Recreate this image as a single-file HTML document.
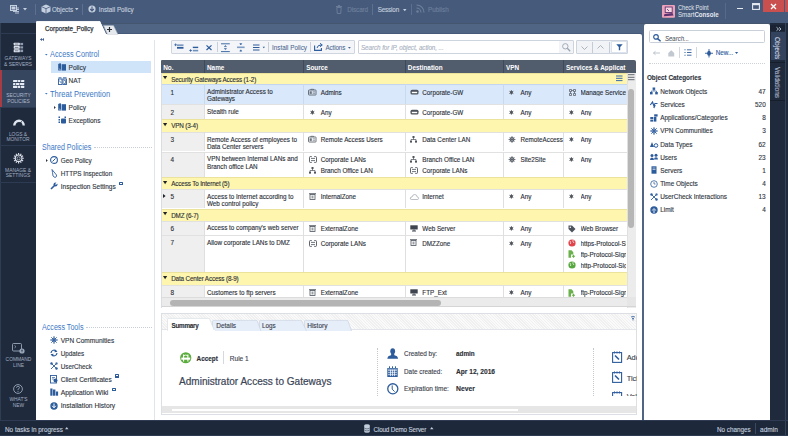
<!DOCTYPE html>
<html><head><meta charset="utf-8">
<style>
*{margin:0;padding:0;box-sizing:border-box}
html,body{width:788px;height:436px;overflow:hidden;background:#506483;font-family:"Liberation Sans",sans-serif;position:relative}
.a{position:absolute}
.t{position:absolute;white-space:nowrap;line-height:1;-webkit-text-stroke:0.12px}
svg{overflow:visible}
</style></head><body>

<div class="a" style="left:0px;top:0px;width:788px;height:23px;background:#465a7b;"></div>
<div class="a" style="left:36px;top:23px;width:752px;height:1px;background:#43556f;"></div>
<div class="a" style="left:36px;top:33px;width:606px;height:1px;background:#46597a;"></div>
<div class="a" style="left:0px;top:23px;width:36px;height:397px;background:#1f2a3d;"></div>
<div class="a" style="left:769.5px;top:23px;width:18.5px;height:397px;background:#1f2a3d;"></div>
<div class="a" style="left:0px;top:420px;width:788px;height:16px;background:#1d283a;"></div>
<div class="a" style="left:0px;top:420px;width:788px;height:1px;background:#2e3b52;"></div>
<div class="a" style="left:0px;top:23px;width:0.8px;height:397px;background:#2f3c53;"></div>
<div class="a" style="left:36px;top:34px;width:606px;height:386px;background:#ffffff;border-top-right-radius:2px"></div>
<div class="a" style="left:154px;top:40px;width:1px;height:380px;background:#e1e4e8;"></div>
<div class="a" style="left:644px;top:23.8px;width:125.6px;height:396.5px;background:#ffffff;border-top-left-radius:2px;border-top-right-radius:2px"></div>
<svg class="a" style="left:10px;top:5px;" width="10" height="9" viewBox="0 0 10 9"><rect x="0.5" y="0.5" width="6" height="5" fill="none" stroke="#c4cfdf" stroke-width="1"/><rect x="1.5" y="1.5" width="4" height="3" fill="#c4cfdf"/><path d="M3 6.5 h6 M5 8 h4 M7 3 h2 M7 4.5 h2" stroke="#c4cfdf" stroke-width="0.9"/></svg>
<svg class="a" style="left:23px;top:8px;" width="4" height="3" viewBox="0 0 4 3"><path d="M0 0 h4 l-2 2.5z" fill="#c4cfdf"/></svg>
<div class="a" style="left:35px;top:4px;width:1px;height:11px;background:#5d7090;"></div>
<svg class="a" style="left:41px;top:4px;" width="10" height="10" viewBox="0 0 10 10"><path d="M5 0.5 L9.5 2.6 V7.4 L5 9.5 L0.5 7.4 V2.6 Z" fill="#c4cfdf"/><path d="M0.5 2.6 L5 4.7 L9.5 2.6 M5 4.7 V9.5" stroke="#465a7c" stroke-width="0.8" fill="none"/></svg>
<div class="t" style="left:52.00px;top:7.07px;font-size:6.3px;color:#c4cfdf;letter-spacing:-0.048px;">Objects</div>
<svg class="a" style="left:75px;top:8.3px;" width="3.5" height="2.5" viewBox="0 0 3.5 2.5"><path d="M0 0 h3.5 l-1.75 2.2z" fill="#c4cfdf"/></svg>
<div class="a" style="left:82px;top:4px;width:1px;height:11px;background:#5d7090;"></div>
<svg class="a" style="left:88px;top:5px;" width="8" height="8" viewBox="0 0 8 8"><circle cx="4" cy="4" r="3.6" fill="#c4cfdf"/><path d="M4 1.6 V5.6 M2.2 4 L4 5.9 L5.8 4" stroke="#465a7c" stroke-width="1.1" fill="none"/></svg>
<div class="t" style="left:98.70px;top:7.03px;font-size:6.3px;color:#c4cfdf;">Install Policy</div>
<svg class="a" style="left:336px;top:5px;" width="6" height="9" viewBox="0 0 6 9"><path d="M0 1.5 h6 M2 0.5 h2 M0.8 2.5 h4.4 l-0.5 6 h-3.4z" stroke="#6e809c" stroke-width="0.9" fill="none"/></svg>
<div class="t" style="left:347.30px;top:7.20px;font-size:6.3px;color:#6e809c;letter-spacing:-0.097px;">Discard</div>
<div class="a" style="left:372px;top:4px;width:1px;height:11px;background:#5d7090;"></div>
<div class="t" style="left:377.70px;top:7.24px;font-size:6.3px;color:#c4cfdf;letter-spacing:-0.152px;">Session</div>
<svg class="a" style="left:403px;top:8.5px;" width="3.5" height="2.5" viewBox="0 0 3.5 2.5"><path d="M0 0 h3.5 l-1.75 2.2z" fill="#c4cfdf"/></svg>
<div class="a" style="left:411px;top:4px;width:1px;height:11px;background:#5d7090;"></div>
<svg class="a" style="left:416px;top:4px;" width="9" height="9" viewBox="0 0 9 9"><circle cx="1.5" cy="7.5" r="1.2" fill="#6e809c"/><path d="M0.5 4 A4.5 4.5 0 0 1 5 8.5 M0.5 1 A7.5 7.5 0 0 1 8 8.5" stroke="#6e809c" stroke-width="1.1" fill="none"/></svg>
<div class="t" style="left:428.00px;top:7.13px;font-size:6.3px;color:#6e809c;">Publish</div>
<svg class="a" style="left:662px;top:4.7px;" width="13" height="13" viewBox="0 0 13 13"><rect x="0" y="0" width="13" height="12.8" rx="1" fill="#eea3bb"/><rect x="3.2" y="2" width="7" height="5.5" fill="#f6d5e0" stroke="#5a3270" stroke-width="0.9"/><path d="M2.5 9 L10.5 8 L11.5 10.5 L1.8 11.2 Z" fill="#5a3270"/><path d="M5 4 l2 2" stroke="#5a3270" stroke-width="0.8"/></svg>
<div class="t" style="left:678.00px;top:5.10px;font-size:6.4px;color:#e3e8f0;transform:scaleX(0.8839);transform-origin:0 0;-webkit-text-stroke:0">Check Point</div>
<div class="t" style="left:678.00px;top:11.26px;font-size:7.6px;color:#e3e8f0;transform:scaleX(0.8100);transform-origin:0 0;-webkit-text-stroke:0">Smart<b>Console</b></div>
<div class="a" style="left:725px;top:3px;width:1px;height:16px;background:#566a8b;"></div>
<div class="a" style="left:737px;top:8px;width:6px;height:1.3px;background:#e6ebf2;"></div>
<svg class="a" style="left:752px;top:3px;" width="8" height="7" viewBox="0 0 8 7"><rect x="0.6" y="0.6" width="6.8" height="5.8" fill="none" stroke="#e6ebf2" stroke-width="1.1"/><rect x="0.6" y="0.6" width="6.8" height="1.6" fill="#e6ebf2"/></svg>
<div class="a" style="left:763px;top:0px;width:21px;height:11.5px;background:#c9504f;"></div>
<svg class="a" style="left:770px;top:2.5px;" width="7" height="7" viewBox="0 0 7 7"><path d="M1 1 L6 6 M6 1 L1 6" stroke="#ffffff" stroke-width="1.3"/></svg>
<div class="a" style="left:785px;top:0px;width:3px;height:11.5px;background:#c9504f;"></div>
<svg class="a" style="left:36px;top:21px;" width="84" height="14" viewBox="0 0 84 14"><path d="M0 14 V1.5 Q0 0.3 1.3 0.3 H64 L70 13 H84 V14 Z" fill="#ffffff"/></svg>
<svg class="a" style="left:100px;top:24.5px;" width="19" height="9.5" viewBox="0 0 19 9.5"><path d="M3.5 0.5 H13.5 L18 9.5 H7.5 Z" fill="#e5e9ee" stroke="#9aa6b6" stroke-width="0.6"/></svg>
<svg class="a" style="left:36px;top:21px;" width="84" height="14" viewBox="0 0 84 14"><path d="M0 14 V1.5 Q0 0.3 1.3 0.3 H64 L70 13.4 H84 V14 Z" fill="#ffffff"/></svg>
<div class="t" style="left:45.00px;top:25.63px;font-size:6.3px;color:#30353d;-webkit-text-stroke:0.25px">Corporate_Policy</div>
<svg class="a" style="left:107.3px;top:27px;" width="5" height="5" viewBox="0 0 5 5"><path d="M2.5 0 V5 M0 2.5 H5" stroke="#2b2f36" stroke-width="1.2"/></svg>
<div class="a" style="left:0px;top:33px;width:36px;height:1px;background:#2c3a52;"></div>
<svg class="a" style="left:13px;top:41.5px;" width="11" height="11" viewBox="0 0 11 11"><rect x="0.7" y="0.7" width="6.1" height="2.7" rx="0.6" fill="#e4e9f1"/><rect x="0.7" y="4.1" width="6.1" height="2.6" rx="0.6" fill="#e4e9f1"/><rect x="0.7" y="7.3" width="6.1" height="3" rx="0.6" fill="#e4e9f1"/><path d="M1.8 2.05 h3.6 M1.8 5.4 h3.6 M1.8 8.8 h3.6" stroke="#4a5568" stroke-width="0.7"/><rect x="7.3" y="0.9" width="2.8" height="2.3" fill="#8f9bb0"/><rect x="7.3" y="4.3" width="2.8" height="2.2" fill="#8f9bb0"/><rect x="7.3" y="7.6" width="2.8" height="2.5" fill="#8f9bb0"/></svg>
<div class="t" style="left:0.00px;top:57.24px;font-size:4.9px;color:#a3afc1;width:36px;text-align:center;-webkit-text-stroke:0">GATEWAYS</div>
<div class="t" style="left:0.00px;top:62.74px;font-size:4.9px;color:#a3afc1;width:36px;text-align:center;-webkit-text-stroke:0">&amp; SERVERS</div>
<div class="a" style="left:0px;top:70px;width:36px;height:1px;background:#2c3a52;"></div>
<div class="a" style="left:0px;top:70px;width:36px;height:37px;background:#37465f;"></div>
<div class="a" style="left:0px;top:70px;width:1.7px;height:37px;background:#a83c45;"></div>
<svg class="a" style="left:12.8px;top:80px;" width="11.5" height="8" viewBox="0 0 11.5 8"><g fill="#e6ecf5"><rect x="0" y="0" width="4.4" height="2" rx="0.4"/><rect x="4.9" y="0" width="2.4" height="2" rx="0.4"/><rect x="8" y="0" width="3.3" height="2" rx="0.4"/><rect x="0" y="3" width="2.3" height="2" rx="0.4"/><rect x="2.9" y="3" width="3.5" height="2" rx="0.4"/><rect x="6.9" y="3" width="4.4" height="2" rx="0.4"/><rect x="0" y="5.7" width="4.4" height="2.2" rx="0.4"/><rect x="4.9" y="5.7" width="2.4" height="2.2" rx="0.4"/><rect x="8" y="5.7" width="3.3" height="2.2" rx="0.4"/></g></svg>
<div class="t" style="left:0.00px;top:94.44px;font-size:4.9px;color:#aebacb;width:37px;text-align:center;-webkit-text-stroke:0">SECURITY</div>
<div class="t" style="left:0.00px;top:99.94px;font-size:4.9px;color:#aebacb;width:37px;text-align:center;-webkit-text-stroke:0">POLICIES</div>
<div class="a" style="left:0px;top:107px;width:36px;height:1px;background:#2c3a52;"></div>
<svg class="a" style="left:12.8px;top:118.5px;" width="12" height="7" viewBox="0 0 12 7"><path d="M1.3 6.5 A4.7 4.7 0 0 1 10.7 6.5" stroke="#dfe5ee" stroke-width="2.4" fill="none"/><path d="M6 6.5 L8.6 2.3" stroke="#1f2a3d" stroke-width="0.9"/></svg>
<div class="t" style="left:0.00px;top:132.64px;font-size:4.9px;color:#a3afc1;width:36px;text-align:center;-webkit-text-stroke:0">LOGS &amp;</div>
<div class="t" style="left:0.00px;top:137.64px;font-size:4.9px;color:#a3afc1;width:36px;text-align:center;-webkit-text-stroke:0">MONITOR</div>
<div class="a" style="left:0px;top:144.5px;width:36px;height:1px;background:#2c3a52;"></div>
<svg class="a" style="left:12.8px;top:153px;" width="11.5" height="11" viewBox="0 0 11.5 11"><circle cx="5.6" cy="5.3" r="3.3" fill="none" stroke="#dfe5ee" stroke-width="1.1"/><circle cx="5.6" cy="5.3" r="1.6" fill="none" stroke="#dfe5ee" stroke-width="0.6"/><path d="M9.20 5.30 L10.80 5.30 M8.72 7.10 L10.10 7.90 M7.40 8.42 L8.20 9.80 M5.60 8.90 L5.60 10.50 M3.80 8.42 L3.00 9.80 M2.48 7.10 L1.10 7.90 M2.00 5.30 L0.40 5.30 M2.48 3.50 L1.10 2.70 M3.80 2.18 L3.00 0.80 M5.60 1.70 L5.60 0.10 M7.40 2.18 L8.20 0.80 M8.72 3.50 L10.10 2.70 " stroke="#dfe5ee" stroke-width="1.1"/></svg>
<div class="t" style="left:0.00px;top:169.24px;font-size:4.9px;color:#a3afc1;width:36px;text-align:center;-webkit-text-stroke:0">MANAGE &amp;</div>
<div class="t" style="left:0.00px;top:174.44px;font-size:4.9px;color:#a3afc1;width:36px;text-align:center;-webkit-text-stroke:0">SETTINGS</div>
<div class="a" style="left:0px;top:181.5px;width:36px;height:1px;background:#2c3a52;"></div>
<svg class="a" style="left:12px;top:343px;" width="13" height="11" viewBox="0 0 13 11"><rect x="0.5" y="0.5" width="9" height="7.5" rx="1" fill="none" stroke="#9aa7bb" stroke-width="0.9"/><path d="M2.5 2.5 l1.5 1.2 l-1.5 1.2" stroke="#9aa7bb" stroke-width="0.7" fill="none"/><circle cx="10" cy="8" r="2.6" fill="#9aa7bb"/><path d="M9 7.2 h2 M10 7.2 v2" stroke="#1f2a3d" stroke-width="0.6"/></svg>
<div class="t" style="left:0.00px;top:358.24px;font-size:4.9px;color:#a3afc1;width:37px;text-align:center;-webkit-text-stroke:0">COMMAND</div>
<div class="t" style="left:0.00px;top:363.64px;font-size:4.9px;color:#a3afc1;width:37px;text-align:center;-webkit-text-stroke:0">LINE</div>
<svg class="a" style="left:13px;top:384px;" width="10" height="10" viewBox="0 0 10 10"><circle cx="5" cy="5" r="4.4" fill="none" stroke="#9aa7bb" stroke-width="0.9"/><path d="M3.5 3.8 Q3.5 2.3 5 2.3 Q6.5 2.3 6.5 3.6 Q6.5 4.6 5 5.2 V6.2" stroke="#9aa7bb" stroke-width="0.8" fill="none"/><circle cx="5" cy="7.6" r="0.5" fill="#9aa7bb"/></svg>
<div class="t" style="left:0.00px;top:398.24px;font-size:4.9px;color:#a3afc1;width:37px;text-align:center;-webkit-text-stroke:0">WHAT&#39;S</div>
<div class="t" style="left:0.00px;top:403.54px;font-size:4.9px;color:#a3afc1;width:37px;text-align:center;-webkit-text-stroke:0">NEW</div>
<div class="t" style="left:5.00px;top:426.71px;font-size:6.36px;color:#c3cedd;">No tasks in progress</div>
<svg class="a" style="left:65px;top:427px;" width="3.5" height="2.5" viewBox="0 0 3.5 2.5"><path d="M0 2.2 h3.5 l-1.75 -2.2z" fill="#c3cedd"/></svg>
<svg class="a" style="left:364px;top:424px;" width="6" height="9" viewBox="0 0 6 9"><ellipse cx="3" cy="1.5" rx="2.8" ry="1.3" fill="#c3cedd"/><path d="M0.2 1.5 V7.5 A2.8 1.3 0 0 0 5.8 7.5 V1.5" fill="#c3cedd"/><path d="M0.2 3.6 A2.8 1.3 0 0 0 5.8 3.6 M0.2 5.6 A2.8 1.3 0 0 0 5.8 5.6" stroke="#1d283a" stroke-width="0.5" fill="none"/></svg>
<div class="t" style="left:373.50px;top:426.84px;font-size:6.3px;color:#c3cedd;letter-spacing:-0.155px;">Cloud Demo Server</div>
<svg class="a" style="left:430px;top:427px;" width="3.5" height="2.5" viewBox="0 0 3.5 2.5"><path d="M0 2.2 h3.5 l-1.75 -2.2z" fill="#c3cedd"/></svg>
<div class="t" style="left:717.00px;top:426.72px;font-size:6.33px;color:#c3cedd;">No changes</div>
<div class="a" style="left:755px;top:423px;width:1px;height:11px;background:#3a4860;"></div>
<div class="t" style="left:760.00px;top:426.65px;font-size:6.54px;color:#c3cedd;">admin</div>
<div class="a" style="left:785px;top:421px;width:1px;height:15px;background:#34425a;"></div>
<div class="a" style="left:0px;top:435px;width:788px;height:1px;background:#2c3a52;"></div>
<div class="a" style="left:770px;top:25.2px;width:16px;height:6.2px;background:#1a2333;"></div>
<svg class="a" style="left:775.5px;top:26.5px;" width="6" height="4" viewBox="0 0 6 4"><path d="M0.5 0.3 L2.5 2 L0.5 3.7 M3 0.3 L5 2 L3 3.7" stroke="#c3cedd" stroke-width="0.9" fill="none"/></svg>
<div class="a" style="left:770.5px;top:32.4px;width:15px;height:28px;background:#34435d;"></div>
<div class="t" style="left:780.2px;top:36.5px;transform-origin:0 0;transform:rotate(90deg);font-size:6.58px;color:#c9d3e2;">Objects</div>
<div class="t" style="left:780.2px;top:66.5px;transform-origin:0 0;transform:rotate(90deg);font-size:6.43px;color:#a9b5c8;">Validations</div>
<div class="a" style="left:770px;top:61.5px;width:16px;height:1px;background:#161e2b;"></div>
<div class="a" style="left:770px;top:100px;width:16px;height:1px;background:#161e2b;"></div>
<div class="a" style="left:785.3px;top:23px;width:0.8px;height:397px;background:#34425a;"></div>
<svg class="a" style="left:40px;top:37.8px;" width="4" height="3" viewBox="0 0 4 3"><path d="M1.9 0 L0 1.5 L1.9 3 Z M3.9 0 L2 1.5 L3.9 3 Z" fill="#2d4f88"/></svg>
<svg class="a" style="left:44.5px;top:53.5px;" width="3" height="2" viewBox="0 0 3 2"><path d="M0 0 h2.6 l-1.3 1.6z" fill="#3b78c6"/></svg>
<div class="t" style="left:49.80px;top:50.24px;font-size:8.5px;color:#3b78c6;transform:scaleX(0.8608);transform-origin:0 0;-webkit-text-stroke:0">Access Control</div>
<div class="a" style="left:51px;top:61px;width:100px;height:12px;background:#cfe3f9;"></div>
<svg class="a" style="left:58px;top:63.2px;" width="8.5" height="8" viewBox="0 0 8.5 8"><path d="M0.2 1 L2 0.2 L3 0.6 V7.6 H0.2 Z" fill="#2d5c9c"/><path d="M1.2 5.5 Q1.6 7 2.6 6.8" stroke="#ffffff" stroke-width="0.5" fill="none"/><rect x="3.6" y="1.2" width="4.4" height="6.4" fill="#2d5c9c"/></svg>
<div class="t" style="left:68.60px;top:65.36px;font-size:6.5px;color:#2f3540;">Policy</div>
<svg class="a" style="left:58px;top:76.5px;" width="9" height="8" viewBox="0 0 9 8"><path d="M0.5 0.8 h3 M5 0.8 h3.5" stroke="#2d5c9c" stroke-width="0.9"/><rect x="0.5" y="2" width="3.5" height="5.5" fill="none" stroke="#2d5c9c" stroke-width="0.9"/><rect x="5" y="2" width="3.5" height="5.5" fill="none" stroke="#2d5c9c" stroke-width="0.9"/><path d="M1.3 3.5 L3.2 6 M6 3.5 h1.5 v3 h-1.5" stroke="#2d5c9c" stroke-width="0.7" fill="none"/></svg>
<div class="t" style="left:68.60px;top:78.26px;font-size:6.5px;color:#2f3540;">NAT</div>
<svg class="a" style="left:44.5px;top:93px;" width="3" height="2" viewBox="0 0 3 2"><path d="M0 0 h2.6 l-1.3 1.6z" fill="#3b78c6"/></svg>
<div class="t" style="left:49.80px;top:89.64px;font-size:8.5px;color:#3b78c6;transform:scaleX(0.8896);transform-origin:0 0;-webkit-text-stroke:0">Threat Prevention</div>
<svg class="a" style="left:53.5px;top:105.5px;" width="2" height="3" viewBox="0 0 2 3"><path d="M0 0 v3 l1.8 -1.5z" fill="#2f3540"/></svg>
<svg class="a" style="left:58px;top:103px;" width="8.5" height="8" viewBox="0 0 8.5 8"><path d="M0.2 1 L2 0.2 L3 0.6 V7.6 H0.2 Z" fill="#2d5c9c"/><path d="M1.2 5.5 Q1.6 7 2.6 6.8" stroke="#ffffff" stroke-width="0.5" fill="none"/><rect x="3.6" y="1.2" width="4.4" height="6.4" fill="#2d5c9c"/></svg>
<div class="t" style="left:68.60px;top:104.66px;font-size:6.5px;color:#2f3540;">Policy</div>
<svg class="a" style="left:58px;top:116px;" width="9" height="8" viewBox="0 0 9 8"><rect x="0.5" y="0.5" width="1.5" height="1.5" fill="#2d5c9c"/><rect x="0.5" y="3" width="1.5" height="1.5" fill="#2d5c9c"/><rect x="0.5" y="5.5" width="1.5" height="1.5" fill="#2d5c9c"/><rect x="6.5" y="0.5" width="1.5" height="1.5" fill="#2d5c9c"/><rect x="3" y="2.5" width="5" height="5" rx="0.8" fill="#2d5c9c"/></svg>
<div class="t" style="left:68.60px;top:117.86px;font-size:6.5px;color:#2f3540;">Exceptions</div>
<div class="t" style="left:41.90px;top:142.71px;font-size:8.3px;color:#3b78c6;transform:scaleX(0.8532);transform-origin:0 0;-webkit-text-stroke:0">Shared Policies</div>
<div class="a" style="left:93.5px;top:147px;width:58px;height:0;border-top:1px dotted #c9ced6"></div>
<svg class="a" style="left:45.5px;top:159px;" width="2" height="3" viewBox="0 0 2 3"><path d="M0 0 v3 l1.8 -1.5z" fill="#2f3540"/></svg>
<svg class="a" style="left:50px;top:156px;" width="8" height="8" viewBox="0 0 8 8"><circle cx="4" cy="4" r="3.4" fill="none" stroke="#2d5c9c" stroke-width="1.1"/><path d="M2.5 5.5 L5.5 2.5" stroke="#2d5c9c" stroke-width="1"/></svg>
<div class="t" style="left:60.80px;top:157.89px;font-size:6.41px;color:#2f3540;">Geo Policy</div>
<svg class="a" style="left:51px;top:169px;" width="7" height="9" viewBox="0 0 7 9"><path d="M1 0.5 L3 3 L5.5 6 Q6 8 4 8.5 L2 7 L1.5 3.5 Z" fill="none" stroke="#2d5c9c" stroke-width="0.9"/></svg>
<div class="t" style="left:60.80px;top:171.22px;font-size:6.33px;color:#2f3540;">HTTPS Inspection</div>
<svg class="a" style="left:50px;top:182px;" width="8" height="8" viewBox="0 0 8 8"><path d="M1 7 L4.5 3.5" stroke="#2d5c9c" stroke-width="1.6"/><circle cx="5.5" cy="2.5" r="2" fill="#2d5c9c"/><path d="M5.5 2.5 L7.5 0.5" stroke="#ffffff" stroke-width="1.1"/></svg>
<div class="t" style="left:60.80px;top:184.16px;font-size:6.51px;color:#2f3540;">Inspection Settings</div>
<div class="a" style="left:119px;top:181.5px;width:4px;height:3.6px;background:#2d5c9c;border-radius:0.5px"></div>
<div class="a" style="left:120px;top:182.5px;width:1.5px;height:1.2px;background:#ffffff;"></div>
<div class="t" style="left:42.00px;top:322.61px;font-size:8.3px;color:#3b78c6;transform:scaleX(0.8595);transform-origin:0 0;-webkit-text-stroke:0">Access Tools</div>
<div class="a" style="left:86px;top:327px;width:66px;height:0;border-top:1px dotted #c9ced6"></div>
<div class="t" style="left:60.70px;top:337.64px;font-size:6.56px;color:#2f3540;">VPN Communities</div>
<div class="t" style="left:60.70px;top:350.73px;font-size:6.31px;color:#2f3540;">Updates</div>
<div class="t" style="left:60.70px;top:363.73px;font-size:6.3px;color:#2f3540;">UserCheck</div>
<div class="t" style="left:60.70px;top:376.65px;font-size:6.52px;color:#2f3540;">Client Certificates</div>
<div class="t" style="left:60.70px;top:389.97px;font-size:6.75px;color:#2f3540;">Application Wiki</div>
<div class="t" style="left:60.70px;top:403.30px;font-size:6.68px;color:#2f3540;">Installation History</div>
<svg class="a" style="left:50px;top:336px;" width="8" height="8" viewBox="0 0 8 8"><circle cx="4" cy="4" r="2" fill="none" stroke="#2d5c9c" stroke-width="0.9"/><path d="M4 0 v8 M0 4 h8 M1.2 1.2 l5.6 5.6 M6.8 1.2 l-5.6 5.6" stroke="#2d5c9c" stroke-width="0.8"/></svg>
<svg class="a" style="left:50px;top:349px;" width="8" height="8" viewBox="0 0 8 8"><path d="M6.5 2.5 A3 3 0 0 0 1 4 M1.5 5.5 A3 3 0 0 0 7 4" stroke="#2d5c9c" stroke-width="1.2" fill="none"/><path d="M5 0.5 L7.5 2.8 L4.5 3.2z M3 7.5 L0.5 5.2 L3.5 4.8z" fill="#2d5c9c"/></svg>
<svg class="a" style="left:50px;top:362px;" width="8" height="8" viewBox="0 0 8 8"><path d="M1 1 L7 7 M7 1 L1 7" stroke="#2d5c9c" stroke-width="0.9"/><circle cx="1.5" cy="1.5" r="1.2" fill="#2d5c9c"/><circle cx="6.5" cy="6.5" r="1.2" fill="#2d5c9c"/><circle cx="6.5" cy="1.5" r="1" fill="none" stroke="#2d5c9c" stroke-width="0.6"/></svg>
<svg class="a" style="left:50px;top:375px;" width="8" height="9" viewBox="0 0 8 9"><rect x="0.5" y="0.5" width="6" height="7.5" fill="none" stroke="#2d5c9c" stroke-width="0.9"/><circle cx="5.5" cy="5.5" r="2" fill="#2d5c9c"/><path d="M2 2.5 h3 M2 4 h2" stroke="#2d5c9c" stroke-width="0.7"/></svg>
<div class="a" style="left:115.3px;top:374.3px;width:4px;height:3.6px;background:#2d5c9c;border-radius:0.5px"></div>
<div class="a" style="left:116.3px;top:375.3px;width:1.5px;height:1.2px;background:#ffffff;"></div>
<svg class="a" style="left:50px;top:388px;" width="8" height="8" viewBox="0 0 8 8"><rect x="0.3" y="0.5" width="2.2" height="7.2" fill="#2d5c9c"/><rect x="3" y="1.5" width="2.4" height="6.2" fill="#2d5c9c"/><rect x="5.9" y="3.5" width="2.2" height="4.2" fill="#2d5c9c"/></svg>
<div class="a" style="left:112px;top:387.5px;width:4px;height:3.6px;background:#2d5c9c;border-radius:0.5px"></div>
<div class="a" style="left:113px;top:388.5px;width:1.5px;height:1.2px;background:#ffffff;"></div>
<svg class="a" style="left:50px;top:401.5px;" width="8" height="8" viewBox="0 0 8 8"><circle cx="4" cy="4" r="3.7" fill="#2d5c9c"/><path d="M4 1.5 V5.5 M2.2 3.8 L4 5.8 L5.8 3.8" stroke="#ffffff" stroke-width="1" fill="none"/></svg>
<div class="a" style="left:170.5px;top:39.8px;width:184.5px;height:14.6px;background:#f3f5f8;border:1px solid #cfd6df;border-radius:1px"></div>
<svg class="a" style="left:173.5px;top:42.5px;" width="10" height="7" viewBox="0 0 10 7"><path d="M0.3 1.8 h2.6 M1.6 0.5 v2.6" stroke="#2d5c9c" stroke-width="0.8"/><path d="M3 2.1 h6.5" stroke="#2d5c9c" stroke-width="1"/><path d="M3 4.8 h6.5" stroke="#2d5c9c" stroke-width="1.8"/></svg>
<svg class="a" style="left:188.8px;top:45.5px;" width="10" height="7" viewBox="0 0 10 7"><path d="M0.3 4.5 h2.6 M1.6 3.2 v2.6" stroke="#2d5c9c" stroke-width="0.8"/><path d="M3.8 1.4 h5.4" stroke="#2d5c9c" stroke-width="1.4"/><path d="M3.8 4.6 h5.4" stroke="#6f8fbd" stroke-width="1.6"/></svg>
<svg class="a" style="left:206px;top:44.8px;" width="6" height="5.4" viewBox="0 0 6 5.4"><path d="M0.5 0.4 L5.5 5 M5.5 0.4 L0.5 5" stroke="#2d5c9c" stroke-width="1.2"/></svg>
<div class="a" style="left:217.3px;top:42px;width:0.8px;height:10px;background:#c8cfd8;"></div>
<svg class="a" style="left:220.8px;top:42.5px;" width="9" height="9.5" viewBox="0 0 9 9.5"><path d="M0 0.8 h8.8 M0 8.6 h8.8" stroke="#2d5c9c" stroke-width="0.9"/><path d="M3.3 3.6 L4.4 2.6 L5.5 3.6 Z M3.3 5.6 L4.4 6.6 L5.5 5.6 Z" fill="#2d5c9c" stroke="#2d5c9c" stroke-width="0.5"/></svg>
<svg class="a" style="left:237.3px;top:42.8px;" width="8" height="9" viewBox="0 0 8 9"><path d="M0 4.3 h7.6" stroke="#7d9cc6" stroke-width="1.6"/><path d="M2.8 0.6 L3.8 2 L4.8 0.6 Z M2.8 8.2 L3.8 6.8 L4.8 8.2 Z" fill="#2d5c9c" stroke="#2d5c9c" stroke-width="0.5"/></svg>
<svg class="a" style="left:253px;top:44px;" width="13" height="7" viewBox="0 0 13 7"><path d="M0 1 h6.5 M0 3.5 h6.5 M0 6 h6.5" stroke="#2d5c9c" stroke-width="1.2"/><path d="M9.6 2.8 h2.4 l-1.2 1.4z" fill="#2d5c9c"/></svg>
<div class="a" style="left:268px;top:42px;width:0.8px;height:10px;background:#c8cfd8;"></div>
<div class="t" style="left:272.00px;top:45.03px;font-size:6.3px;color:#4a6590;-webkit-text-stroke:0.05px">Install Policy</div>
<div class="a" style="left:310px;top:42px;width:0.8px;height:10px;background:#c8cfd8;"></div>
<svg class="a" style="left:314px;top:43px;" width="10" height="8" viewBox="0 0 10 8"><path d="M0.6 2.5 V7.4 H7.4 V5" stroke="#2d5c9c" stroke-width="1.1" fill="none"/><path d="M3 5 Q3.5 2 7 2 M6 0.3 L8.3 2 L6 3.7" stroke="#2d5c9c" stroke-width="1" fill="none"/></svg>
<div class="t" style="left:325.50px;top:45.14px;font-size:6.3px;color:#4a6590;letter-spacing:-0.141px;-webkit-text-stroke:0.05px">Actions</div>
<svg class="a" style="left:347.5px;top:46.6px;" width="3" height="2" viewBox="0 0 3 2"><path d="M0 0 h2.8 l-1.4 1.7z" fill="#4a6590"/></svg>
<div class="a" style="left:358px;top:40.4px;width:216px;height:14px;background:#ffffff;border:1px solid #cdd4dd;border-radius:1px"></div>
<div class="t" style="left:361.00px;top:45.10px;font-size:6.3px;color:#a9b2bf;letter-spacing:-0.080px;font-style:italic;">Search for IP, object, action, ...</div>
<div class="a" style="left:558.5px;top:41.4px;width:0.8px;height:12px;background:#dde2e8;"></div>
<div class="a" style="left:559.3px;top:41.4px;width:14px;height:12px;background:#f2f4f7;"></div>
<svg class="a" style="left:562.2px;top:43px;" width="9" height="8.5" viewBox="0 0 9 8.5"><circle cx="3.3" cy="3.3" r="2.7" fill="none" stroke="#9aa3b0" stroke-width="0.9"/><path d="M5.3 5.3 L8.2 8.2" stroke="#9aa3b0" stroke-width="1.3"/></svg>
<div class="a" style="left:576.2px;top:40.4px;width:51.4px;height:14px;background:#f1f3f6;border:1px solid #cdd4dd;border-radius:1px"></div>
<svg class="a" style="left:581px;top:45.5px;" width="7" height="4" viewBox="0 0 7 4"><path d="M0.5 0.5 L3.5 3.5 L6.5 0.5" stroke="#9aa3b0" stroke-width="0.8" fill="none"/></svg>
<div class="a" style="left:592px;top:42px;width:0.8px;height:11px;background:#c5ccd5;"></div>
<svg class="a" style="left:597px;top:45px;" width="7" height="4" viewBox="0 0 7 4"><path d="M0.5 3.5 L3.5 0.5 L6.5 3.5" stroke="#9aa3b0" stroke-width="0.8" fill="none"/></svg>
<div class="a" style="left:609.2px;top:42px;width:0.8px;height:11px;background:#c5ccd5;"></div>
<div class="a" style="left:610.5px;top:41.4px;width:16.1px;height:12px;background:#ffffff;border:0.6px solid #dbe3ee"></div>
<svg class="a" style="left:615.5px;top:44.2px;" width="7" height="6.5" viewBox="0 0 7 6.5"><path d="M0.3 0.3 H6.7 L4.2 3 V6.3 H2.8 V3 Z" fill="#2d5c9c"/></svg>
<div class="a" style="left:160.7px;top:60.6px;width:475.7px;height:247px;background:#ffffff;border-left:1px solid #d9dde2"></div>
<div class="a" style="left:160.7px;top:60.2px;width:475.7px;height:12.5px;background:#515c6d;border-top-right-radius:2px;border-top-left-radius:1px"></div>
<div class="t" style="left:163.20px;top:64.90px;font-size:6.4px;color:#ffffff;font-weight:bold;-webkit-text-stroke:0;">No.</div>
<div class="t" style="left:207.00px;top:64.90px;font-size:6.4px;color:#ffffff;font-weight:bold;-webkit-text-stroke:0;">Name</div>
<div class="a" style="left:204.0px;top:60.2px;width:1px;height:12.5px;background:#3f4958;"></div>
<div class="t" style="left:306.20px;top:64.90px;font-size:6.4px;color:#ffffff;font-weight:bold;-webkit-text-stroke:0;">Source</div>
<div class="a" style="left:303.2px;top:60.2px;width:1px;height:12.5px;background:#3f4958;"></div>
<div class="t" style="left:407.80px;top:64.90px;font-size:6.4px;color:#ffffff;font-weight:bold;-webkit-text-stroke:0;">Destination</div>
<div class="a" style="left:404.8px;top:60.2px;width:1px;height:12.5px;background:#3f4958;"></div>
<div class="t" style="left:506.00px;top:64.90px;font-size:6.4px;color:#ffffff;font-weight:bold;-webkit-text-stroke:0;">VPN</div>
<div class="a" style="left:503.0px;top:60.2px;width:1px;height:12.5px;background:#3f4958;"></div>
<div class="t" style="left:566.00px;top:64.90px;font-size:6.4px;color:#ffffff;font-weight:bold;-webkit-text-stroke:0;width:61px;overflow:hidden">Services &amp; Applicat</div>
<div class="a" style="left:563.0px;top:60.2px;width:1px;height:12.5px;background:#3f4958;"></div>
<div class="a" style="left:626.8px;top:72.7px;width:9.6px;height:235px;background:#ececec;border-left:1px solid #e0e0e0"></div>
<svg class="a" style="left:627.8px;top:74px;" width="7" height="7" viewBox="0 0 7 7"><path d="M0 0.7 h6.5 M0 3.3 h6.5 M0 5.7 h6.5" stroke="#555b63" stroke-width="0.9"/></svg>
<div class="a" style="left:628.3px;top:89.3px;width:5.8px;height:138.5px;background:#b6b6b6;border-radius:3px"></div>
<div class="a" style="left:161.7px;top:72.7px;width:465.09999999999997px;height:11.700000000000003px;background:#fef6ae;border-top:1px solid #ebe29b"></div>
<svg class="a" style="left:162.8px;top:76.35000000000001px;" width="4.4" height="3.5" viewBox="0 0 4.4 3.5"><path d="M0 0 h4.2 l-2.1 3.3z" fill="#1f2228"/></svg>
<div class="t" style="left:171.20px;top:76.59px;font-size:6.3px;color:#2b2f36;letter-spacing:-0.142px;">Security Gateways Access (1-2)</div>
<svg class="a" style="left:616.2px;top:75px;" width="7" height="7" viewBox="0 0 7 7"><path d="M0 1 h6.5 M0 3.3 h6.5 M0 5.6 h6.5" stroke="#3a6aa8" stroke-width="1"/></svg>
<div class="a" style="left:161.7px;top:84.4px;width:465.09999999999997px;height:20.0px;background:#d9e8fb;border-top:1px solid #c3d6ee"></div>
<div class="a" style="left:161.7px;top:85.4px;width:42.30000000000001px;height:19.0px;background:#d9e8fb;"></div>
<div class="a" style="left:204.0px;top:84.4px;width:1px;height:20.0px;background:#c9d9ee;"></div>
<div class="a" style="left:303.2px;top:84.4px;width:1px;height:20.0px;background:#c9d9ee;"></div>
<div class="a" style="left:404.8px;top:84.4px;width:1px;height:20.0px;background:#c9d9ee;"></div>
<div class="a" style="left:503.0px;top:84.4px;width:1px;height:20.0px;background:#c9d9ee;"></div>
<div class="a" style="left:563.0px;top:84.4px;width:1px;height:20.0px;background:#c9d9ee;"></div>
<div class="t" style="left:170.40px;top:89.50px;font-size:6.4px;color:#2b2f36;">1</div>
<div class="t" style="left:207.00px;top:89.33px;font-size:6.3px;color:#2b2f36;">Administrator Access to</div>
<div class="t" style="left:207.00px;top:96.43px;font-size:6.3px;color:#2b2f36;">Gateways</div>
<svg class="a" style="left:308.2px;top:88.9px;" width="8.5" height="6.5" viewBox="0 0 8.5 6.5"><rect x="0.5" y="1" width="7.5" height="5" rx="0.5" fill="none" stroke="#4d535c" stroke-width="0.8"/><path d="M2.8 1 V0.3 H5.7 V1" stroke="#4d535c" stroke-width="0.7" fill="none"/><rect x="1.6" y="2.3" width="2.2" height="2.6" fill="#6d737c"/><path d="M4.7 2.8 h2.3 M4.7 4.3 h2.3" stroke="#6d737c" stroke-width="0.7"/></svg>
<div class="t" style="left:320.70px;top:89.83px;font-size:6.3px;color:#2b2f36;">Admins</div>
<svg class="a" style="left:409.8px;top:89.10000000000001px;" width="9" height="6" viewBox="0 0 9 6"><rect x="0.5" y="0.8" width="8" height="4.6" rx="1.5" fill="#4d535c"/><rect x="1.8" y="2.8" width="5.4" height="1.4" fill="#ffffff"/></svg>
<div class="t" style="left:422.30px;top:89.83px;font-size:6.3px;color:#2b2f36;">Corporate-GW</div>
<svg class="a" style="left:509.3px;top:89.7px;" width="5" height="5" viewBox="0 0 5 5"><circle cx="2.4" cy="2.4" r="1.3" fill="#4f545c"/><path d="M2.4 0.2 V4.6 M0.5 1.3 L4.3 3.5 M4.3 1.3 L0.5 3.5" stroke="#4f545c" stroke-width="0.95"/></svg>
<div class="t" style="left:520.50px;top:89.83px;font-size:6.3px;color:#2b2f36;">Any</div>
<svg class="a" style="left:568.5px;top:88.9px;" width="7" height="7" viewBox="0 0 7 7"><path d="M0.5 0.5 h2 v2 h-2z M4.5 0.5 h2 v2 h-2z M0.5 4.5 h2 v2 h-2z M4.5 4.5 h2 v2 h-2z" fill="none" stroke="#4d535c" stroke-width="0.7"/><path d="M2.5 1.5 h2 M1.5 2.5 v2 M5.5 2.5 v2" stroke="#4d535c" stroke-width="0.7"/></svg>
<div class="t" style="left:580.50px;top:89.83px;font-size:6.3px;color:#2b2f36;width:45.8px;overflow:hidden;">Manage Services</div>
<div class="a" style="left:161.7px;top:104.4px;width:465.09999999999997px;height:14.399999999999991px;background:#ffffff;border-top:1px solid #e1e1e1"></div>
<div class="a" style="left:161.7px;top:105.4px;width:42.30000000000001px;height:13.399999999999991px;background:#efefef;"></div>
<div class="a" style="left:204.0px;top:104.4px;width:1px;height:14.399999999999991px;background:#dfdfdf;"></div>
<div class="a" style="left:303.2px;top:104.4px;width:1px;height:14.399999999999991px;background:#dfdfdf;"></div>
<div class="a" style="left:404.8px;top:104.4px;width:1px;height:14.399999999999991px;background:#dfdfdf;"></div>
<div class="a" style="left:503.0px;top:104.4px;width:1px;height:14.399999999999991px;background:#dfdfdf;"></div>
<div class="a" style="left:563.0px;top:104.4px;width:1px;height:14.399999999999991px;background:#dfdfdf;"></div>
<div class="t" style="left:170.40px;top:109.50px;font-size:6.4px;color:#2b2f36;">2</div>
<div class="t" style="left:207.00px;top:109.33px;font-size:6.3px;color:#2b2f36;">Stealth rule</div>
<svg class="a" style="left:309.5px;top:109.7px;" width="5" height="5" viewBox="0 0 5 5"><circle cx="2.4" cy="2.4" r="1.3" fill="#4f545c"/><path d="M2.4 0.2 V4.6 M0.5 1.3 L4.3 3.5 M4.3 1.3 L0.5 3.5" stroke="#4f545c" stroke-width="0.95"/></svg>
<div class="t" style="left:320.70px;top:109.83px;font-size:6.3px;color:#2b2f36;">Any</div>
<svg class="a" style="left:409.8px;top:109.10000000000001px;" width="9" height="6" viewBox="0 0 9 6"><rect x="0.5" y="0.8" width="8" height="4.6" rx="1.5" fill="#4d535c"/><rect x="1.8" y="2.8" width="5.4" height="1.4" fill="#ffffff"/></svg>
<div class="t" style="left:422.30px;top:109.83px;font-size:6.3px;color:#2b2f36;">Corporate-GW</div>
<svg class="a" style="left:509.3px;top:109.7px;" width="5" height="5" viewBox="0 0 5 5"><circle cx="2.4" cy="2.4" r="1.3" fill="#4f545c"/><path d="M2.4 0.2 V4.6 M0.5 1.3 L4.3 3.5 M4.3 1.3 L0.5 3.5" stroke="#4f545c" stroke-width="0.95"/></svg>
<div class="t" style="left:520.50px;top:109.83px;font-size:6.3px;color:#2b2f36;">Any</div>
<svg class="a" style="left:569.3px;top:109.7px;" width="5" height="5" viewBox="0 0 5 5"><circle cx="2.4" cy="2.4" r="1.3" fill="#4f545c"/><path d="M2.4 0.2 V4.6 M0.5 1.3 L4.3 3.5 M4.3 1.3 L0.5 3.5" stroke="#4f545c" stroke-width="0.95"/></svg>
<div class="t" style="left:580.50px;top:109.83px;font-size:6.3px;color:#2b2f36;width:45.8px;overflow:hidden;">Any</div>
<div class="a" style="left:161.7px;top:118.8px;width:465.09999999999997px;height:13.000000000000014px;background:#fef6ae;border-top:1px solid #ebe29b"></div>
<svg class="a" style="left:162.8px;top:123.10000000000001px;" width="4.4" height="3.5" viewBox="0 0 4.4 3.5"><path d="M0 0 h4.2 l-2.1 3.3z" fill="#1f2228"/></svg>
<div class="t" style="left:171.20px;top:123.34px;font-size:6.3px;color:#2b2f36;letter-spacing:-0.148px;">VPN (3-4)</div>
<div class="a" style="left:161.7px;top:131.8px;width:465.09999999999997px;height:19.69999999999999px;background:#ffffff;border-top:1px solid #e1e1e1"></div>
<div class="a" style="left:161.7px;top:132.8px;width:42.30000000000001px;height:18.69999999999999px;background:#efefef;"></div>
<div class="a" style="left:204.0px;top:131.8px;width:1px;height:19.69999999999999px;background:#dfdfdf;"></div>
<div class="a" style="left:303.2px;top:131.8px;width:1px;height:19.69999999999999px;background:#dfdfdf;"></div>
<div class="a" style="left:404.8px;top:131.8px;width:1px;height:19.69999999999999px;background:#dfdfdf;"></div>
<div class="a" style="left:503.0px;top:131.8px;width:1px;height:19.69999999999999px;background:#dfdfdf;"></div>
<div class="a" style="left:563.0px;top:131.8px;width:1px;height:19.69999999999999px;background:#dfdfdf;"></div>
<div class="t" style="left:170.40px;top:136.90px;font-size:6.4px;color:#2b2f36;">3</div>
<div class="t" style="left:207.00px;top:136.73px;font-size:6.3px;color:#2b2f36;">Remote Access of employees to</div>
<div class="t" style="left:207.00px;top:143.83px;font-size:6.3px;color:#2b2f36;">Data Center servers</div>
<svg class="a" style="left:308.2px;top:136.3px;" width="8.5" height="6.5" viewBox="0 0 8.5 6.5"><rect x="0.5" y="1" width="7.5" height="5" rx="0.5" fill="none" stroke="#4d535c" stroke-width="0.8"/><path d="M2.8 1 V0.3 H5.7 V1" stroke="#4d535c" stroke-width="0.7" fill="none"/><rect x="1.6" y="2.3" width="2.2" height="2.6" fill="#6d737c"/><path d="M4.7 2.8 h2.3 M4.7 4.3 h2.3" stroke="#6d737c" stroke-width="0.7"/></svg>
<div class="t" style="left:320.70px;top:137.23px;font-size:6.3px;color:#2b2f36;">Remote Access Users</div>
<svg class="a" style="left:410.3px;top:136.3px;" width="7" height="7" viewBox="0 0 7 7"><rect x="2.5" y="0" width="2" height="2" fill="#4d535c"/><rect x="0" y="4.6" width="2" height="2" fill="#4d535c"/><rect x="5" y="4.6" width="2" height="2" fill="#4d535c"/><path d="M3.5 2 V3.5 M1 4.6 V3.5 H6 V4.6" stroke="#4d535c" stroke-width="0.7" fill="none"/></svg>
<div class="t" style="left:422.30px;top:137.23px;font-size:6.3px;color:#2b2f36;">Data Center LAN</div>
<svg class="a" style="left:508.0px;top:136.0px;" width="8" height="7" viewBox="0 0 8 7"><circle cx="4" cy="3.5" r="2" fill="none" stroke="#4d535c" stroke-width="0.9"/><path d="M4 0 v7 M0.5 3.5 h7 M1.5 1 l5 5 M6.5 1 l-5 5" stroke="#4d535c" stroke-width="0.7"/></svg>
<div class="t" style="left:520.50px;top:137.23px;font-size:6.3px;color:#2b2f36;">RemoteAccess</div>
<svg class="a" style="left:569.3px;top:137.1px;" width="5" height="5" viewBox="0 0 5 5"><circle cx="2.4" cy="2.4" r="1.3" fill="#4f545c"/><path d="M2.4 0.2 V4.6 M0.5 1.3 L4.3 3.5 M4.3 1.3 L0.5 3.5" stroke="#4f545c" stroke-width="0.95"/></svg>
<div class="t" style="left:580.50px;top:137.23px;font-size:6.3px;color:#2b2f36;width:45.8px;overflow:hidden;">Any</div>
<div class="a" style="left:161.7px;top:151.5px;width:465.09999999999997px;height:25.400000000000006px;background:#ffffff;border-top:1px solid #e1e1e1"></div>
<div class="a" style="left:161.7px;top:152.5px;width:42.30000000000001px;height:24.400000000000006px;background:#efefef;"></div>
<div class="a" style="left:204.0px;top:151.5px;width:1px;height:25.400000000000006px;background:#dfdfdf;"></div>
<div class="a" style="left:303.2px;top:151.5px;width:1px;height:25.400000000000006px;background:#dfdfdf;"></div>
<div class="a" style="left:404.8px;top:151.5px;width:1px;height:25.400000000000006px;background:#dfdfdf;"></div>
<div class="a" style="left:503.0px;top:151.5px;width:1px;height:25.400000000000006px;background:#dfdfdf;"></div>
<div class="a" style="left:563.0px;top:151.5px;width:1px;height:25.400000000000006px;background:#dfdfdf;"></div>
<div class="t" style="left:170.40px;top:156.60px;font-size:6.4px;color:#2b2f36;">4</div>
<div class="t" style="left:207.00px;top:156.43px;font-size:6.3px;color:#2b2f36;">VPN between Internal LANs and</div>
<div class="t" style="left:207.00px;top:163.53px;font-size:6.3px;color:#2b2f36;">Branch office LAN</div>
<svg class="a" style="left:308.7px;top:155.89999999999998px;" width="8" height="7" viewBox="0 0 8 7"><path d="M2.8 0.6 H1.2 Q0.5 0.6 0.5 1.4 V5.6 Q0.5 6.4 1.2 6.4 H2.8 M5.2 0.6 H6.8 Q7.5 0.6 7.5 1.4 V5.6 Q7.5 6.4 6.8 6.4 H5.2" stroke="#4d535c" stroke-width="0.9" fill="none"/><path d="M2 2.4 H6 M2 4.6 H6" stroke="#4d535c" stroke-width="0.8"/></svg>
<div class="t" style="left:320.70px;top:156.93px;font-size:6.3px;color:#2b2f36;">Corporate LANs</div>
<svg class="a" style="left:308.7px;top:167.0px;" width="7" height="7" viewBox="0 0 7 7"><rect x="2.5" y="0" width="2" height="2" fill="#4d535c"/><rect x="0" y="4.6" width="2" height="2" fill="#4d535c"/><rect x="5" y="4.6" width="2" height="2" fill="#4d535c"/><path d="M3.5 2 V3.5 M1 4.6 V3.5 H6 V4.6" stroke="#4d535c" stroke-width="0.7" fill="none"/></svg>
<div class="t" style="left:320.70px;top:167.93px;font-size:6.3px;color:#2b2f36;">Branch Office LAN</div>
<svg class="a" style="left:410.3px;top:156.0px;" width="7" height="7" viewBox="0 0 7 7"><rect x="2.5" y="0" width="2" height="2" fill="#4d535c"/><rect x="0" y="4.6" width="2" height="2" fill="#4d535c"/><rect x="5" y="4.6" width="2" height="2" fill="#4d535c"/><path d="M3.5 2 V3.5 M1 4.6 V3.5 H6 V4.6" stroke="#4d535c" stroke-width="0.7" fill="none"/></svg>
<div class="t" style="left:422.30px;top:156.93px;font-size:6.3px;color:#2b2f36;">Branch Office LAN</div>
<svg class="a" style="left:410.3px;top:166.89999999999998px;" width="8" height="7" viewBox="0 0 8 7"><path d="M2.8 0.6 H1.2 Q0.5 0.6 0.5 1.4 V5.6 Q0.5 6.4 1.2 6.4 H2.8 M5.2 0.6 H6.8 Q7.5 0.6 7.5 1.4 V5.6 Q7.5 6.4 6.8 6.4 H5.2" stroke="#4d535c" stroke-width="0.9" fill="none"/><path d="M2 2.4 H6 M2 4.6 H6" stroke="#4d535c" stroke-width="0.8"/></svg>
<div class="t" style="left:422.30px;top:167.93px;font-size:6.3px;color:#2b2f36;">Corporate LANs</div>
<svg class="a" style="left:508.0px;top:155.7px;" width="8" height="7" viewBox="0 0 8 7"><circle cx="4" cy="3.5" r="2" fill="none" stroke="#4d535c" stroke-width="0.9"/><path d="M4 0 v7 M0.5 3.5 h7 M1.5 1 l5 5 M6.5 1 l-5 5" stroke="#4d535c" stroke-width="0.7"/></svg>
<div class="t" style="left:520.50px;top:156.93px;font-size:6.3px;color:#2b2f36;">Site2Site</div>
<svg class="a" style="left:569.3px;top:156.79999999999998px;" width="5" height="5" viewBox="0 0 5 5"><circle cx="2.4" cy="2.4" r="1.3" fill="#4f545c"/><path d="M2.4 0.2 V4.6 M0.5 1.3 L4.3 3.5 M4.3 1.3 L0.5 3.5" stroke="#4f545c" stroke-width="0.95"/></svg>
<div class="t" style="left:580.50px;top:156.93px;font-size:6.3px;color:#2b2f36;width:45.8px;overflow:hidden;">Any</div>
<div class="a" style="left:161.7px;top:176.9px;width:465.09999999999997px;height:11.900000000000006px;background:#fef6ae;border-top:1px solid #ebe29b"></div>
<svg class="a" style="left:162.8px;top:180.65000000000003px;" width="4.4" height="3.5" viewBox="0 0 4.4 3.5"><path d="M0 0 h4.2 l-2.1 3.3z" fill="#1f2228"/></svg>
<div class="t" style="left:171.20px;top:180.89px;font-size:6.3px;color:#2b2f36;letter-spacing:-0.132px;">Access To Internet (5)</div>
<div class="a" style="left:161.7px;top:188.8px;width:465.09999999999997px;height:19.69999999999999px;background:#ffffff;border-top:1px solid #e1e1e1"></div>
<div class="a" style="left:161.7px;top:189.8px;width:42.30000000000001px;height:18.69999999999999px;background:#efefef;"></div>
<div class="a" style="left:204.0px;top:188.8px;width:1px;height:19.69999999999999px;background:#dfdfdf;"></div>
<div class="a" style="left:303.2px;top:188.8px;width:1px;height:19.69999999999999px;background:#dfdfdf;"></div>
<div class="a" style="left:404.8px;top:188.8px;width:1px;height:19.69999999999999px;background:#dfdfdf;"></div>
<div class="a" style="left:503.0px;top:188.8px;width:1px;height:19.69999999999999px;background:#dfdfdf;"></div>
<div class="a" style="left:563.0px;top:188.8px;width:1px;height:19.69999999999999px;background:#dfdfdf;"></div>
<svg class="a" style="left:163px;top:194.4px;" width="3" height="4.2" viewBox="0 0 3 4.2"><path d="M0 0 v4 l2.6 -2z" fill="#1f2228"/></svg>
<div class="t" style="left:170.40px;top:193.90px;font-size:6.4px;color:#2b2f36;">5</div>
<div class="t" style="left:207.00px;top:193.73px;font-size:6.3px;color:#2b2f36;">Access to Internet according to</div>
<div class="t" style="left:207.00px;top:200.83px;font-size:6.3px;color:#2b2f36;">Web control policy</div>
<svg class="a" style="left:308.7px;top:193.0px;" width="7" height="7" viewBox="0 0 7 7"><rect x="1" y="1.5" width="5" height="5" fill="none" stroke="#4d535c" stroke-width="0.8"/><path d="M0 0.6 h7 M2.5 3.2 h2 M2.5 4.8 h2" stroke="#4d535c" stroke-width="0.8"/></svg>
<div class="t" style="left:320.70px;top:194.23px;font-size:6.3px;color:#2b2f36;">InternalZone</div>
<svg class="a" style="left:409.8px;top:193.5px;" width="9" height="6" viewBox="0 0 9 6"><path d="M1.5 5.5 Q0 5.5 0.3 4 Q0.6 2.8 2 3 Q2.5 0.5 4.8 0.5 Q7 0.6 7.2 3 Q8.7 3.2 8.6 4.4 Q8.5 5.5 7.3 5.5 Z" fill="none" stroke="#8d939b" stroke-width="0.6"/></svg>
<div class="t" style="left:422.30px;top:194.23px;font-size:6.3px;color:#2b2f36;">Internet</div>
<svg class="a" style="left:509.3px;top:194.1px;" width="5" height="5" viewBox="0 0 5 5"><circle cx="2.4" cy="2.4" r="1.3" fill="#4f545c"/><path d="M2.4 0.2 V4.6 M0.5 1.3 L4.3 3.5 M4.3 1.3 L0.5 3.5" stroke="#4f545c" stroke-width="0.95"/></svg>
<div class="t" style="left:520.50px;top:194.23px;font-size:6.3px;color:#2b2f36;">Any</div>
<svg class="a" style="left:569.3px;top:194.1px;" width="5" height="5" viewBox="0 0 5 5"><circle cx="2.4" cy="2.4" r="1.3" fill="#4f545c"/><path d="M2.4 0.2 V4.6 M0.5 1.3 L4.3 3.5 M4.3 1.3 L0.5 3.5" stroke="#4f545c" stroke-width="0.95"/></svg>
<div class="t" style="left:580.50px;top:194.23px;font-size:6.3px;color:#2b2f36;width:45.8px;overflow:hidden;">Any</div>
<div class="a" style="left:161.7px;top:208.5px;width:465.09999999999997px;height:12.0px;background:#fef6ae;border-top:1px solid #ebe29b"></div>
<svg class="a" style="left:162.8px;top:212.3px;" width="4.4" height="3.5" viewBox="0 0 4.4 3.5"><path d="M0 0 h4.2 l-2.1 3.3z" fill="#1f2228"/></svg>
<div class="t" style="left:171.20px;top:212.54px;font-size:6.3px;color:#2b2f36;letter-spacing:-0.152px;">DMZ (6-7)</div>
<div class="a" style="left:161.7px;top:220.5px;width:465.09999999999997px;height:14.699999999999989px;background:#ffffff;border-top:1px solid #e1e1e1"></div>
<div class="a" style="left:161.7px;top:221.5px;width:42.30000000000001px;height:13.699999999999989px;background:#efefef;"></div>
<div class="a" style="left:204.0px;top:220.5px;width:1px;height:14.699999999999989px;background:#dfdfdf;"></div>
<div class="a" style="left:303.2px;top:220.5px;width:1px;height:14.699999999999989px;background:#dfdfdf;"></div>
<div class="a" style="left:404.8px;top:220.5px;width:1px;height:14.699999999999989px;background:#dfdfdf;"></div>
<div class="a" style="left:503.0px;top:220.5px;width:1px;height:14.699999999999989px;background:#dfdfdf;"></div>
<div class="a" style="left:563.0px;top:220.5px;width:1px;height:14.699999999999989px;background:#dfdfdf;"></div>
<div class="t" style="left:170.40px;top:225.60px;font-size:6.4px;color:#2b2f36;">6</div>
<div class="t" style="left:207.00px;top:225.43px;font-size:6.3px;color:#2b2f36;">Access to company&#39;s web server</div>
<svg class="a" style="left:308.7px;top:224.7px;" width="7" height="7" viewBox="0 0 7 7"><rect x="1" y="1.5" width="5" height="5" fill="none" stroke="#4d535c" stroke-width="0.8"/><path d="M0 0.6 h7 M2.5 3.2 h2 M2.5 4.8 h2" stroke="#4d535c" stroke-width="0.8"/></svg>
<div class="t" style="left:320.70px;top:225.93px;font-size:6.3px;color:#2b2f36;">ExternalZone</div>
<svg class="a" style="left:409.8px;top:224.7px;" width="8" height="7" viewBox="0 0 8 7"><rect x="0.3" y="0.3" width="7.4" height="4.2" fill="#3f454e"/><path d="M2 6 h4 M4 4.5 v1.5" stroke="#3f454e" stroke-width="1"/></svg>
<div class="t" style="left:422.30px;top:225.93px;font-size:6.3px;color:#2b2f36;">Web Server</div>
<svg class="a" style="left:509.3px;top:225.79999999999998px;" width="5" height="5" viewBox="0 0 5 5"><circle cx="2.4" cy="2.4" r="1.3" fill="#4f545c"/><path d="M2.4 0.2 V4.6 M0.5 1.3 L4.3 3.5 M4.3 1.3 L0.5 3.5" stroke="#4f545c" stroke-width="0.95"/></svg>
<div class="t" style="left:520.50px;top:225.93px;font-size:6.3px;color:#2b2f36;">Any</div>
<svg class="a" style="left:568.0px;top:224.7px;" width="8" height="8" viewBox="0 0 8 8"><path d="M0.5 0.5 H4 L7.5 4 L4 7.5 L0.5 4 Z" fill="#4d535c"/><circle cx="2.3" cy="2.3" r="0.8" fill="#ffffff"/></svg>
<div class="t" style="left:580.50px;top:225.93px;font-size:6.3px;color:#2b2f36;width:45.8px;overflow:hidden;">Web Browser</div>
<div class="a" style="left:161.7px;top:235.2px;width:465.09999999999997px;height:36.69999999999999px;background:#ffffff;border-top:1px solid #e1e1e1"></div>
<div class="a" style="left:161.7px;top:236.2px;width:42.30000000000001px;height:35.69999999999999px;background:#efefef;"></div>
<div class="a" style="left:204.0px;top:235.2px;width:1px;height:36.69999999999999px;background:#dfdfdf;"></div>
<div class="a" style="left:303.2px;top:235.2px;width:1px;height:36.69999999999999px;background:#dfdfdf;"></div>
<div class="a" style="left:404.8px;top:235.2px;width:1px;height:36.69999999999999px;background:#dfdfdf;"></div>
<div class="a" style="left:503.0px;top:235.2px;width:1px;height:36.69999999999999px;background:#dfdfdf;"></div>
<div class="a" style="left:563.0px;top:235.2px;width:1px;height:36.69999999999999px;background:#dfdfdf;"></div>
<div class="t" style="left:170.40px;top:240.30px;font-size:6.4px;color:#2b2f36;">7</div>
<div class="t" style="left:207.00px;top:240.13px;font-size:6.3px;color:#2b2f36;">Allow corporate LANs to DMZ</div>
<svg class="a" style="left:308.7px;top:239.59999999999997px;" width="8" height="7" viewBox="0 0 8 7"><path d="M2.8 0.6 H1.2 Q0.5 0.6 0.5 1.4 V5.6 Q0.5 6.4 1.2 6.4 H2.8 M5.2 0.6 H6.8 Q7.5 0.6 7.5 1.4 V5.6 Q7.5 6.4 6.8 6.4 H5.2" stroke="#4d535c" stroke-width="0.9" fill="none"/><path d="M2 2.4 H6 M2 4.6 H6" stroke="#4d535c" stroke-width="0.8"/></svg>
<div class="t" style="left:320.70px;top:240.63px;font-size:6.3px;color:#2b2f36;">Corporate LANs</div>
<svg class="a" style="left:410.3px;top:239.39999999999998px;" width="7" height="7" viewBox="0 0 7 7"><rect x="1" y="1.5" width="5" height="5" fill="none" stroke="#4d535c" stroke-width="0.8"/><path d="M0 0.6 h7 M2.5 3.2 h2 M2.5 4.8 h2" stroke="#4d535c" stroke-width="0.8"/></svg>
<div class="t" style="left:422.30px;top:240.63px;font-size:6.3px;color:#2b2f36;">DMZZone</div>
<svg class="a" style="left:509.3px;top:240.49999999999997px;" width="5" height="5" viewBox="0 0 5 5"><circle cx="2.4" cy="2.4" r="1.3" fill="#4f545c"/><path d="M2.4 0.2 V4.6 M0.5 1.3 L4.3 3.5 M4.3 1.3 L0.5 3.5" stroke="#4f545c" stroke-width="0.95"/></svg>
<div class="t" style="left:520.50px;top:240.63px;font-size:6.3px;color:#2b2f36;">Any</div>
<svg class="a" style="left:568.0px;top:239.39999999999998px;" width="8" height="8" viewBox="0 0 8 8"><circle cx="4" cy="4" r="3.6" fill="#e0454b"/><path d="M2 2 Q3 3.5 2.5 5 M5 1 Q4.5 3 6 4" stroke="#ffffff" stroke-width="0.7" fill="none"/></svg>
<div class="t" style="left:580.50px;top:240.63px;font-size:6.3px;color:#2b2f36;width:45.8px;overflow:hidden;">https-Protocol-Signature</div>
<svg class="a" style="left:568.0px;top:249.89999999999998px;" width="8" height="8" viewBox="0 0 8 8"><path d="M0.5 0.3 H3.5 L5.3 2.3 V4.5 H3 V7.7 H0.5 Z" fill="#6ab04c"/><path d="M5.5 4.8 V7.8 M4 6.3 H7" stroke="#6ab04c" stroke-width="1.1"/></svg>
<div class="t" style="left:580.50px;top:251.63px;font-size:6.3px;color:#2b2f36;width:45.8px;overflow:hidden;">ftp-Protocol-Signature</div>
<svg class="a" style="left:568.0px;top:261.4px;" width="8" height="8" viewBox="0 0 8 8"><circle cx="4" cy="4" r="3.6" fill="#57a83f"/><path d="M2 2 Q3 3.5 2.5 5 M5 1 Q4.5 3 6 4" stroke="#ffffff" stroke-width="0.7" fill="none"/></svg>
<div class="t" style="left:580.50px;top:262.63px;font-size:6.3px;color:#2b2f36;width:45.8px;overflow:hidden;">http-Protocol-Signature</div>
<div class="a" style="left:161.7px;top:271.9px;width:465.09999999999997px;height:13.0px;background:#fef6ae;border-top:1px solid #ebe29b"></div>
<svg class="a" style="left:162.8px;top:276.2px;" width="4.4" height="3.5" viewBox="0 0 4.4 3.5"><path d="M0 0 h4.2 l-2.1 3.3z" fill="#1f2228"/></svg>
<div class="t" style="left:171.20px;top:276.44px;font-size:6.3px;color:#2b2f36;letter-spacing:-0.140px;">Data Center Access (8-9)</div>
<div class="a" style="left:161.7px;top:284.9px;width:465.09999999999997px;height:12.400000000000034px;background:#ffffff;border-top:1px solid #e1e1e1"></div>
<div class="a" style="left:161.7px;top:285.9px;width:42.30000000000001px;height:11.400000000000034px;background:#efefef;"></div>
<div class="a" style="left:204.0px;top:284.9px;width:1px;height:12.400000000000034px;background:#dfdfdf;"></div>
<div class="a" style="left:303.2px;top:284.9px;width:1px;height:12.400000000000034px;background:#dfdfdf;"></div>
<div class="a" style="left:404.8px;top:284.9px;width:1px;height:12.400000000000034px;background:#dfdfdf;"></div>
<div class="a" style="left:503.0px;top:284.9px;width:1px;height:12.400000000000034px;background:#dfdfdf;"></div>
<div class="a" style="left:563.0px;top:284.9px;width:1px;height:12.400000000000034px;background:#dfdfdf;"></div>
<div class="t" style="left:170.40px;top:290.00px;font-size:6.4px;color:#2b2f36;">8</div>
<div class="t" style="left:207.00px;top:289.83px;font-size:6.3px;color:#2b2f36;">Customers to ftp servers</div>
<svg class="a" style="left:308.7px;top:289.09999999999997px;" width="7" height="7" viewBox="0 0 7 7"><rect x="1" y="1.5" width="5" height="5" fill="none" stroke="#4d535c" stroke-width="0.8"/><path d="M0 0.6 h7 M2.5 3.2 h2 M2.5 4.8 h2" stroke="#4d535c" stroke-width="0.8"/></svg>
<div class="t" style="left:320.70px;top:290.33px;font-size:6.3px;color:#2b2f36;">ExternalZone</div>
<svg class="a" style="left:409.8px;top:289.09999999999997px;" width="8" height="7" viewBox="0 0 8 7"><rect x="0.3" y="0.3" width="7.4" height="4.2" fill="#3f454e"/><path d="M2 6 h4 M4 4.5 v1.5" stroke="#3f454e" stroke-width="1"/></svg>
<div class="t" style="left:422.30px;top:290.33px;font-size:6.3px;color:#2b2f36;">FTP_Ext</div>
<svg class="a" style="left:509.3px;top:290.2px;" width="5" height="5" viewBox="0 0 5 5"><circle cx="2.4" cy="2.4" r="1.3" fill="#4f545c"/><path d="M2.4 0.2 V4.6 M0.5 1.3 L4.3 3.5 M4.3 1.3 L0.5 3.5" stroke="#4f545c" stroke-width="0.95"/></svg>
<div class="t" style="left:520.50px;top:290.33px;font-size:6.3px;color:#2b2f36;">Any</div>
<svg class="a" style="left:568.0px;top:288.59999999999997px;" width="8" height="8" viewBox="0 0 8 8"><path d="M0.5 0.3 H3.5 L5.3 2.3 V4.5 H3 V7.7 H0.5 Z" fill="#6ab04c"/><path d="M5.5 4.8 V7.8 M4 6.3 H7" stroke="#6ab04c" stroke-width="1.1"/></svg>
<div class="t" style="left:580.50px;top:290.33px;font-size:6.3px;color:#2b2f36;width:45.8px;overflow:hidden;">ftp-Protocol-Signature</div>
<div class="a" style="left:161.7px;top:297.3px;width:465.09999999999997px;height:10px;background:#ebebeb;border-top:1px solid #dcdcdc;border-bottom:1px solid #d5d5d5"></div>
<div class="a" style="left:170px;top:299.8px;width:271px;height:6.2px;background:#b4b4b4;border-radius:3px"></div>
<div class="a" style="left:626.8px;top:297.3px;width:9.6px;height:10px;background:#e6e6e6;border-bottom:1px solid #d5d5d5"></div>
<div class="a" style="left:649.1px;top:30.4px;width:116px;height:12.8px;background:#ffffff;border:1px solid #c9d0da;border-radius:1.5px"></div>
<svg class="a" style="left:653px;top:33.8px;" width="8" height="7" viewBox="0 0 8 7"><circle cx="3" cy="2.9" r="2.3" fill="none" stroke="#2d5c9c" stroke-width="1.2"/><path d="M4.6 4.6 L7.6 7.2" stroke="#2d5c9c" stroke-width="1.5"/></svg>
<div class="t" style="left:665.00px;top:34.61px;font-size:7.2px;color:#4a505a;transform:scaleX(0.8330);transform-origin:0 0;font-style:italic;-webkit-text-stroke:0.05px">Search...</div>
<svg class="a" style="left:653px;top:51px;" width="7" height="4" viewBox="0 0 7 4"><path d="M0.5 2 H7 M2.5 0.3 L0.5 2 L2.5 3.7" stroke="#b5bcc6" stroke-width="0.9" fill="none"/></svg>
<svg class="a" style="left:667.5px;top:50px;" width="6.5" height="6.5" viewBox="0 0 6.5 6.5"><path d="M0.3 3 L3.25 0.3 L6.2 3 V6.5 H0.3 Z" fill="#c2c8d0"/></svg>
<div class="a" style="left:679.3px;top:47px;width:0.8px;height:11.4px;background:#d3d8de;"></div>
<svg class="a" style="left:684.4px;top:48.8px;" width="8" height="7.5" viewBox="0 0 8 7.5"><path d="M0.5 0.8 h1 M0.5 3.5 h1 M0.5 6.2 h1" stroke="#2d5c9c" stroke-width="1.1"/><path d="M3 0.8 h4.5 M3 3.5 h4.5 M3 6.2 h4.5" stroke="#2d5c9c" stroke-width="0.9"/></svg>
<div class="a" style="left:696px;top:47px;width:0.8px;height:11.4px;background:#d3d8de;"></div>
<svg class="a" style="left:704.5px;top:48.5px;" width="8" height="8.5" viewBox="0 0 8 8.5"><path d="M4 0 V8.5 M0 4.25 H8" stroke="#2d5c9c" stroke-width="0.9"/><ellipse cx="4" cy="4.25" rx="1.9" ry="2.6" fill="#2d5c9c"/></svg>
<div class="t" style="left:715.70px;top:50.33px;font-size:6.3px;color:#2d5c9c;">New...</div>
<svg class="a" style="left:734.5px;top:51.6px;" width="3.2" height="2.2" viewBox="0 0 3.2 2.2"><path d="M0 0 h3.2 l-1.6 2z" fill="#2d5c9c"/></svg>
<div class="a" style="left:649px;top:63px;width:116px;height:0;border-top:1px dotted #cdd2d8"></div>
<div class="t" style="left:646.90px;top:74.51px;font-size:6.36px;color:#2f3540;font-weight:bold;">Object Categories</div>
<div class="t" style="left:660.20px;top:88.99px;font-size:6.43px;color:#2f3540;">Network Objects</div>
<div class="t" style="right:22.30px;top:88.99px;font-size:6.43px;color:#2f3540;">47</div>
<div class="t" style="left:660.20px;top:102.19px;font-size:6.43px;color:#2f3540;">Services</div>
<div class="t" style="right:22.30px;top:102.19px;font-size:6.43px;color:#2f3540;">520</div>
<div class="t" style="left:660.20px;top:115.29px;font-size:6.43px;color:#2f3540;">Applications/Categories</div>
<div class="t" style="right:22.30px;top:115.29px;font-size:6.43px;color:#2f3540;">8</div>
<div class="t" style="left:660.20px;top:128.39px;font-size:6.43px;color:#2f3540;">VPN Communities</div>
<div class="t" style="right:22.30px;top:128.39px;font-size:6.43px;color:#2f3540;">3</div>
<div class="t" style="left:660.20px;top:141.59px;font-size:6.43px;color:#2f3540;">Data Types</div>
<div class="t" style="right:22.30px;top:141.59px;font-size:6.43px;color:#2f3540;">62</div>
<div class="t" style="left:660.20px;top:154.69px;font-size:6.43px;color:#2f3540;">Users</div>
<div class="t" style="right:22.30px;top:154.69px;font-size:6.43px;color:#2f3540;">23</div>
<div class="t" style="left:660.20px;top:168.09px;font-size:6.43px;color:#2f3540;">Servers</div>
<div class="t" style="right:22.30px;top:168.09px;font-size:6.43px;color:#2f3540;">1</div>
<div class="t" style="left:660.20px;top:181.19px;font-size:6.43px;color:#2f3540;">Time Objects</div>
<div class="t" style="right:22.30px;top:181.19px;font-size:6.43px;color:#2f3540;">4</div>
<div class="t" style="left:660.20px;top:194.39px;font-size:6.43px;color:#2f3540;">UserCheck Interactions</div>
<div class="t" style="right:22.30px;top:194.39px;font-size:6.43px;color:#2f3540;">13</div>
<div class="t" style="left:660.20px;top:207.49px;font-size:6.43px;color:#2f3540;">Limit</div>
<div class="t" style="right:22.30px;top:207.49px;font-size:6.43px;color:#2f3540;">4</div>
<svg class="a" style="left:649.8px;top:87.3px;" width="8" height="8" viewBox="0 0 8 8"><rect x="2.6" y="0.5" width="2.6" height="2.4" fill="#2d5c9c"/><rect x="0" y="5" width="2.6" height="2.4" fill="#2d5c9c"/><rect x="5.2" y="5" width="2.6" height="2.4" fill="#2d5c9c"/><path d="M3.9 2.9 V4 M1.3 5 V4 H6.5 V5" stroke="#2d5c9c" stroke-width="0.7" fill="none"/></svg>
<svg class="a" style="left:649.8px;top:100.5px;" width="8" height="8" viewBox="0 0 8 8"><path d="M0.3 4 L2.5 1 L3.8 4.5 L5 2.5 L7.5 2.5 M5.2 4 L3.8 7" stroke="#2d5c9c" stroke-width="1.2" fill="none"/></svg>
<svg class="a" style="left:649.8px;top:113.6px;" width="8" height="8" viewBox="0 0 8 8"><rect x="0.3" y="3" width="3" height="2" fill="#2d5c9c"/><rect x="0.3" y="5.6" width="3" height="2" fill="#2d5c9c"/><rect x="3.9" y="3" width="2.5" height="4.6" fill="#2d5c9c"/><rect x="4.2" y="0.3" width="3.4" height="2.3" fill="#2d5c9c"/></svg>
<svg class="a" style="left:649.8px;top:126.69999999999999px;" width="8" height="8" viewBox="0 0 8 8"><circle cx="4" cy="4" r="2.1" fill="none" stroke="#2d5c9c" stroke-width="0.9"/><path d="M4 0 v8 M0 4 h8 M1.2 1.2 l5.6 5.6 M6.8 1.2 l-5.6 5.6" stroke="#2d5c9c" stroke-width="0.8"/></svg>
<svg class="a" style="left:649.8px;top:139.9px;" width="8" height="8" viewBox="0 0 8 8"><path d="M0 7 L2 2 L4 7 Z" fill="#2d5c9c"/><circle cx="6" cy="5.5" r="1.8" fill="none" stroke="#2d5c9c" stroke-width="1"/></svg>
<svg class="a" style="left:649.8px;top:153.0px;" width="8" height="8" viewBox="0 0 8 8"><circle cx="2" cy="2.5" r="1.5" fill="#2d5c9c"/><circle cx="6" cy="2.2" r="1.5" fill="#2d5c9c"/><path d="M0 7 Q0 4.5 2 4.5 Q4 4.5 4 7z M4 6.5 Q4 4.2 6 4.2 Q8 4.2 8 6.5z" fill="#2d5c9c"/></svg>
<svg class="a" style="left:649.8px;top:166.4px;" width="8" height="8" viewBox="0 0 8 8"><rect x="1.5" y="0.3" width="5" height="7.4" fill="#2d5c9c"/><path d="M2.5 2 h3 M2.5 3.5 h3" stroke="#ffffff" stroke-width="0.6"/></svg>
<svg class="a" style="left:649.8px;top:179.5px;" width="8" height="8" viewBox="0 0 8 8"><circle cx="4" cy="4" r="3.3" fill="none" stroke="#2d5c9c" stroke-width="0.8"/><path d="M4 2 V4 H5.5" stroke="#2d5c9c" stroke-width="0.7" fill="none"/></svg>
<svg class="a" style="left:649.8px;top:192.7px;" width="8" height="8" viewBox="0 0 8 8"><path d="M1 1 L7 7 M7 1 L1 7" stroke="#2d5c9c" stroke-width="0.9"/><circle cx="1.5" cy="1.5" r="1.2" fill="#2d5c9c"/><circle cx="6.5" cy="6.5" r="1.2" fill="#2d5c9c"/><circle cx="6.5" cy="1.5" r="1" fill="none" stroke="#2d5c9c" stroke-width="0.6"/></svg>
<svg class="a" style="left:649.8px;top:205.8px;" width="8" height="8" viewBox="0 0 8 8"><circle cx="4" cy="4" r="3.7" fill="#2d5c9c"/><path d="M2.3 4.5 Q4 1 5.7 4.5 M4 4 V7" stroke="#ffffff" stroke-width="0.9" fill="none"/></svg>
<div class="a" style="left:160.7px;top:313px;width:476px;height:101.5px;background:#ffffff;border:1px solid #dcdfe3"></div>
<div class="a" style="left:161.7px;top:314px;width:474px;height:16.3px;background:repeating-linear-gradient(45deg,#f0f0f0 0 1px,#fafafa 1px 2px);border-bottom:1px solid #e2e5e9"></div>
<svg class="a" style="left:304px;top:319.6px;" width="48.60000000000002" height="10.899999999999977" viewBox="0 0 48.60000000000002 10.899999999999977"><path d="M0.5 10.899999999999977 V1.3 Q0.5 0.4 1.5 0.4 H43.80000000000001 L47.60000000000002 10.899999999999977" fill="#e6eef9" stroke="#c4cfdd" stroke-width="0.6"/></svg>
<svg class="a" style="left:258.5px;top:319.6px;" width="48.5" height="10.899999999999977" viewBox="0 0 48.5 10.899999999999977"><path d="M0.5 10.899999999999977 V1.3 Q0.5 0.4 1.5 0.4 H42.39999999999998 L47.5 10.899999999999977" fill="#e6eef9" stroke="#c4cfdd" stroke-width="0.6"/></svg>
<svg class="a" style="left:212px;top:319.6px;" width="50" height="10.899999999999977" viewBox="0 0 50 10.899999999999977"><path d="M0.5 10.899999999999977 V1.3 Q0.5 0.4 1.5 0.4 H45 L49 10.899999999999977" fill="#e6eef9" stroke="#c4cfdd" stroke-width="0.6"/></svg>
<svg class="a" style="left:167.1px;top:317.6px;" width="48.5" height="12.899999999999977" viewBox="0 0 48.5 12.899999999999977"><path d="M0.5 12.899999999999977 V1.3 Q0.5 0.4 1.5 0.4 H42.400000000000006 L47.5 12.899999999999977" fill="#ffffff" stroke="#d5dae0" stroke-width="0.6"/></svg>
<div class="a" style="left:167.5px;top:330px;width:47px;height:1.5px;background:#ffffff;"></div>
<div class="t" style="left:171.40px;top:322.65px;font-size:6.3px;color:#2b2f36;letter-spacing:-0.215px;font-weight:bold;">Summary</div>
<div class="t" style="left:216.30px;top:322.87px;font-size:6.48px;color:#3a414c;">Details</div>
<div class="t" style="left:262.00px;top:322.96px;font-size:6.3px;color:#3a414c;letter-spacing:-0.038px;">Logs</div>
<div class="t" style="left:307.20px;top:322.85px;font-size:6.52px;color:#3a414c;">History</div>
<svg class="a" style="left:630.5px;top:315.5px;" width="4" height="5" viewBox="0 0 4 5"><path d="M0.3 0.5 h3.4 M0.8 1.5 L2 3 L3.2 1.5 M2 1.8 V4.5" stroke="#2d5c9c" stroke-width="0.7" fill="none"/></svg>
<svg class="a" style="left:179.7px;top:351.9px;" width="11.5" height="11.5" viewBox="0 0 11.5 11.5"><circle cx="5.75" cy="5.75" r="5.6" fill="#5aac3d"/><path d="M3.6 2.6 V9.6 M7.9 2.6 V9.6" stroke="#ffffff" stroke-width="1.1"/><path d="M3.6 3.8 Q5.75 2.2 7.9 3.8" stroke="#ffffff" stroke-width="0.9" fill="none"/><rect x="1.3" y="5.6" width="8.9" height="2.1" fill="#ffffff"/></svg>
<div class="t" style="left:196.50px;top:355.59px;font-size:6.42px;color:#2b2f36;font-weight:bold;">Accept</div>
<div class="a" style="left:223.3px;top:351px;width:0.8px;height:13px;background:#d5d9de;"></div>
<div class="t" style="left:229.80px;top:355.55px;font-size:6.54px;color:#3a414c;">Rule 1</div>
<div class="t" style="left:179.00px;top:376.68px;font-size:10.05px;color:#3b4556;-webkit-text-stroke:0.2px">Administrator Access to Gateways</div>
<div class="a" style="left:377px;top:348px;width:0;height:48px;border-left:1px dotted #c4c9cf"></div>
<svg class="a" style="left:386.7px;top:347.6px;" width="11.4" height="11" viewBox="0 0 11.4 11"><ellipse cx="5.7" cy="3.3" rx="2.4" ry="3" fill="#2d5c9c"/><path d="M0.3 10.8 Q0.6 7.6 4 7.2 L4.3 5.6 H7.1 L7.4 7.2 Q10.8 7.6 11.1 10.8 Z" fill="#2d5c9c"/></svg>
<div class="t" style="left:404.00px;top:351.39px;font-size:6.42px;color:#3a414c;">Created by:</div>
<div class="t" style="left:456.00px;top:351.41px;font-size:6.35px;color:#2b2f36;font-weight:bold;">admin</div>
<svg class="a" style="left:387px;top:365.8px;" width="11" height="11.2" viewBox="0 0 11 11.2"><rect x="0.3" y="2" width="10.4" height="9" fill="#2d5c9c"/><path d="M2.5 0.3 V2.5 M5.5 0.3 V2.5 M8.5 0.3 V2.5" stroke="#2d5c9c" stroke-width="1"/><path d="M1 4.7 h9 M1 6.7 h9 M1 8.7 h9 M3.5 3.7 v6.4 M5.5 3.7 v6.4 M7.5 3.7 v6.4" stroke="#ffffff" stroke-width="0.7"/><path d="M1 3.2 h9" stroke="#ffffff" stroke-width="0.6"/></svg>
<div class="t" style="left:404.00px;top:369.11px;font-size:6.36px;color:#3a414c;">Date created:</div>
<div class="t" style="left:456.00px;top:369.01px;font-size:6.64px;color:#2b2f36;font-weight:bold;">Apr 12, 2016</div>
<svg class="a" style="left:386.7px;top:382.6px;" width="11.6" height="11.6" viewBox="0 0 11.6 11.6"><circle cx="5.8" cy="5.8" r="5.05" fill="none" stroke="#2d5c9c" stroke-width="1.3"/><path d="M5.2 2.4 V6.2 L7.6 8.6" stroke="#2d5c9c" stroke-width="1" fill="none"/></svg>
<div class="t" style="left:404.00px;top:386.15px;font-size:6.52px;color:#3a414c;">Expiration time:</div>
<div class="t" style="left:456.00px;top:386.04px;font-size:6.84px;color:#2b2f36;font-weight:bold;">Never</div>
<div class="a" style="left:593px;top:348px;width:0;height:48px;border-left:1px dotted #c4c9cf"></div>
<svg class="a" style="left:611.6px;top:351.2px;" width="10.2" height="12" viewBox="0 0 10.2 12"><rect x="0.6" y="1.6" width="9" height="9.8" fill="none" stroke="#2d5c9c" stroke-width="1.1"/><path d="M2.5 0.3 V2.5 M5 0.3 V2.5 M7.5 0.3 V2.5" stroke="#2d5c9c" stroke-width="0.8"/><path d="M3 4.5 L7 8.5" stroke="#2d5c9c" stroke-width="1.6"/></svg>
<svg class="a" style="left:611.6px;top:370.6px;" width="10.2" height="12" viewBox="0 0 10.2 12"><rect x="0.6" y="1.6" width="9" height="9.8" fill="none" stroke="#2d5c9c" stroke-width="1.1"/><path d="M2.5 0.3 V2.5 M5 0.3 V2.5 M7.5 0.3 V2.5" stroke="#2d5c9c" stroke-width="0.8"/><path d="M3 4.5 L7 8.5" stroke="#2d5c9c" stroke-width="1.6"/></svg>
<div class="a" style="left:611.6px;top:390.8px;width:11px;height:5px;overflow:hidden"><svg width="11" height="12" style="position:absolute;left:0;top:0"><rect x="0.6" y="1.6" width="9" height="9.8" fill="none" stroke="#2d5c9c" stroke-width="1.1"/><path d="M2.5 0.3 V2.5 M5 0.3 V2.5 M7.5 0.3 V2.5" stroke="#2d5c9c" stroke-width="0.8"/></svg></div>
<div class="a" style="left:626px;top:350px;width:10.5px;height:46px;overflow:hidden">
<div class="t" style="left:0.7px;top:4.30px;font-size:7.4px;color:#3a414c">Add</div>
<div class="t" style="left:0.7px;top:24.50px;font-size:7.4px;color:#3a414c">Ticket</div>
<div class="t" style="left:0.7px;top:42.60px;font-size:7.4px;color:#3a414c">Valid</div>
</div>
<div class="a" style="left:161.7px;top:406.2px;width:474px;height:6.8px;background:#e6e6e6;"></div>
<div class="a" style="left:171.5px;top:409px;width:346px;height:2px;background:#ffffff;"></div>
</body></html>
